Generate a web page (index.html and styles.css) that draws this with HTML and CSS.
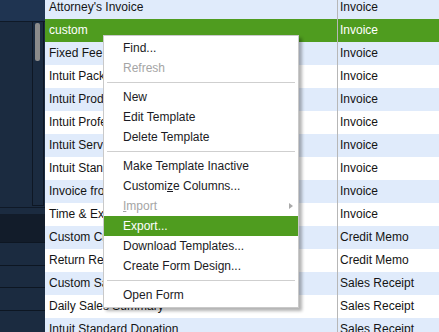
FILE: index.html
```html
<!DOCTYPE html>
<html lang="en">
<head>
    <meta charset="UTF-8">
    <title>Templates</title>
    <link rel="stylesheet" href="styles.css">
</head>
<body>
    <div class="screen">
        <div class="sidebar">
            <div class="side-top"></div>
            <div class="side-list">
                <div class="track"><div class="thumb"></div></div>
            </div>
            <div class="side-gap"></div>
            <div class="side-dark"></div>
            <div class="side-row"></div>
            <div class="side-row"></div>
            <div class="side-row"></div>
            <div class="side-row"></div>
        </div>

        <div class="templates">
            <div class="row alt"><div class="name">Attorney's Invoice</div><div class="type">Invoice</div></div>
            <div class="row selected"><div class="name">custom</div><div class="type">Invoice</div></div>
            <div class="row alt"><div class="name">Fixed Fee Invoice</div><div class="type">Invoice</div></div>
            <div class="row"><div class="name">Intuit Packing Slip</div><div class="type">Invoice</div></div>
            <div class="row alt"><div class="name">Intuit Product Invoice</div><div class="type">Invoice</div></div>
            <div class="row"><div class="name">Intuit Professional Invoice</div><div class="type">Invoice</div></div>
            <div class="row alt"><div class="name">Intuit Service Invoice</div><div class="type">Invoice</div></div>
            <div class="row"><div class="name">Intuit Standard Invoice</div><div class="type">Invoice</div></div>
            <div class="row alt"><div class="name">Invoice from Proposal</div><div class="type">Invoice</div></div>
            <div class="row"><div class="name">Time &amp; Expense Invoice</div><div class="type">Invoice</div></div>
            <div class="row alt"><div class="name">Custom Credit Memo</div><div class="type">Credit Memo</div></div>
            <div class="row"><div class="name">Return Receipt</div><div class="type">Credit Memo</div></div>
            <div class="row alt"><div class="name">Custom Sales Receipt</div><div class="type">Sales Receipt</div></div>
            <div class="row"><div class="name">Daily Sales Summary</div><div class="type">Sales Receipt</div></div>
            <div class="row alt"><div class="name">Intuit Standard Donation</div><div class="type">Sales Receipt</div></div>
        </div>

        <!-- context menu over the list -->
        <div class="menu">
            <div class="item">Find...</div>
            <div class="item disabled">Refresh</div>
            <div class="sep"></div>
            <div class="item">New</div>
            <div class="item">Edit Template</div>
            <div class="item">Delete Template</div>
            <div class="sep"></div>
            <div class="item">Make Template Inactive</div>
            <div class="item">Customi<u>z</u>e Columns...</div>
            <div class="item disabled"><span><u>I</u>mport</span><span class="arrow"></span></div>
            <div class="item active">Export...</div>
            <div class="item">Download Templates...</div>
            <div class="item">Create Form Design...</div>
            <div class="sep"></div>
            <div class="item">Open Form</div>
        </div>
    </div>
</body>
</html>
```

FILE: styles.css
```css
body {
    margin: 0;
    font-family: "Liberation Sans", Arial, sans-serif;
    font-size: 12px;
    overflow: hidden;
}
.screen {
    position: relative;
    display: flex;
    width: 439px;
    height: 332px;
    overflow: hidden;
    background: #1b2b40;
}

/* dark navigation strip on the left */
.sidebar {
    width: 45px;
    flex-shrink: 0;
    display: flex;
    flex-direction: column;
    background: #1b2b40;
}
.side-top {
    height: 22px;
    background: #1f3451;
    border-bottom: 1px solid #0f1927;
}
.side-list {
    height: 189px;
    border-bottom: 1px solid #0f1927;
    display: flex;
    justify-content: flex-end;
    padding-right: 1px;
}
.track {
    width: 10px;
    margin-bottom: 1px;
    border: 1px solid #0e1724;
    border-top: none;
}
.thumb {
    width: 5px;
    height: 38px;
    margin: 1px 0 0 2px;
    background: #8b8b8b;
    border-radius: 2px;
}
.side-gap {
    height: 6px;
}
.side-dark {
    height: 29px;
    background: #121c2a;
}
.side-row {
    height: 22px;
    border-top: 1px solid #0d1622;
}

/* template list */
.templates {
    flex: 1;
    margin-top: -4px;
    background: #fff;
}
.row {
    display: flex;
    height: 23px;
    line-height: 23px;
    color: #141414;
    background: #fff;
}
.row.alt {
    background: #e0ebfb;
}
.row.selected {
    background: #4f9c1f;
    color: #fff;
}
.name {
    width: 288px;
    padding-left: 4px;
    border-right: 1px solid #b7b7b7;
    white-space: nowrap;
    overflow: hidden;
}
.type {
    padding-left: 2px;
    white-space: nowrap;
}

/* popup menu */
.menu {
    position: absolute;
    left: 103px;
    top: 35px;
    width: 194px;
    padding: 2px 0;
    background: #fff;
    border: 1px solid #c9c9c9;
    box-shadow: 3px 3px 3px rgba(0, 0, 0, 0.3);
}
.item {
    display: flex;
    align-items: center;
    height: 20px;
    padding-left: 19px;
    color: #1b1b24;
    white-space: nowrap;
}
.item.disabled {
    color: #a5a5a5;
}
.item.active {
    background: #4f9c1f;
    color: #fff;
}
.arrow {
    margin-left: auto;
    margin-right: 5px;
    width: 0;
    height: 0;
    border-top: 3px solid transparent;
    border-bottom: 3px solid transparent;
    border-left: 4px solid #a9a9a9;
}
.sep {
    height: 1px;
    margin: 4px 3px;
    background: #cfcfcf;
}
```
